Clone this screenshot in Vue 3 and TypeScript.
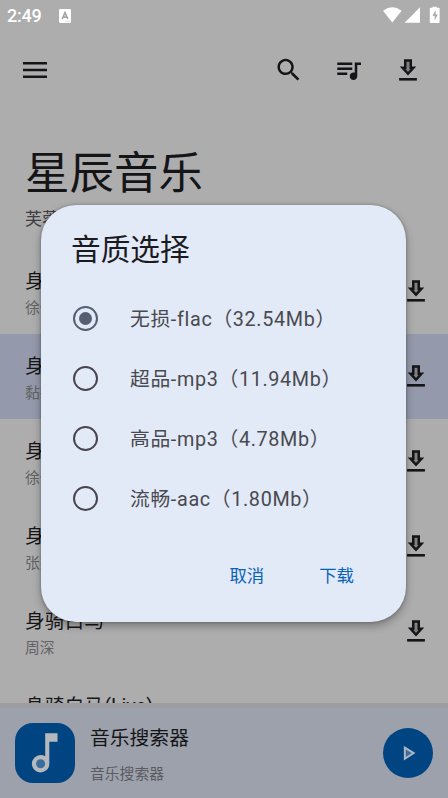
<script setup lang="ts">
import { ref } from 'vue'

interface Song {
  title: string
  artist: string
}

const songs: Song[] = [
  { title: '身骑白马', artist: '徐佳莹' },
  { title: '身骑白马', artist: '黏黏' },
  { title: '身骑白马', artist: '徐佳莹' },
  { title: '身骑白马', artist: '张杰' },
  { title: '身骑白马', artist: '周深' },
  { title: '身骑白马(Live)', artist: '徐佳莹' },
]
const activeSong = ref(1)

const qualities: string[] = [
  '无损-flac（32.54Mb）',
  '超品-mp3（11.94Mb）',
  '高品-mp3（4.78Mb）',
  '流畅-aac（1.80Mb）',
]
const selected = ref(0)
</script>

<template>
  <div class="screen">
    <div class="status">
      <span class="time">2:49</span>
      <svg class="badge" viewBox="0 0 12 14">
        <rect width="12" height="14" rx="1.2" fill="#fff" />
        <path d="M3.2 10 6 3.6 8.8 10M4.2 8.1h3.6" fill="none" stroke="#a5a5a6" stroke-width="1.6" />
        <path d="M6.5 12.3h4" stroke="#b5b5b6" stroke-width="0.8" stroke-dasharray="1 .6" />
      </svg>
      <svg class="signals" viewBox="0 0 58 18">
        <path d="M0 4.3Q9.3-2.6 18.6 4.3L9.3 16Z" fill="#fff" />
        <path d="M21.6 16.2 37 .8V16.2Z" fill="#fff" />
        <path d="M47.6 1.3h2V0h4.2v1.3h2q.8 0 .8.8v13.6q0 .8-.8.8h-8.2q-.8 0-.8-.8V2.1q0-.8.8-.8Z" fill="#fff" />
        <path d="M52.6 3.7 49.5 9.3h2.2v4.4l3-5.8h-2.1Z" fill="#a5a5a6" />
      </svg>
    </div>

    <header class="toolbar">
      <svg class="menu" viewBox="0 0 24 18"><path d="M0 2.2h24M0 9h24M0 15.7h24" stroke="#151518" stroke-width="2.5" /></svg>
      <div class="tools">
        <svg viewBox="-.6 0 24 24"><path d="M15.5 14h-.79l-.28-.27C15.41 12.59 16 11.11 16 9.5 16 5.91 13.09 3 9.5 3S3 5.91 3 9.5 5.91 16 9.5 16c1.61 0 3.09-.59 4.23-1.57l.27.28v.79l5 4.99L20.49 19l-4.99-5zm-6 0C7.01 14 5 11.99 5 9.5S7.01 5 9.5 5 14 7.01 14 9.5 11.99 14 9.5 14z" /></svg>
        <svg viewBox="-.4 0 24 24"><path d="M15 6H3v2h12V6zm0 4H3v2h12v-2zM3 16h8v-2H3v2zM17 6v8.18c-.31-.11-.65-.18-1-.18-1.66 0-3 1.34-3 3s1.34 3 3 3 3-1.34 3-3V8h3V6h-5z" /></svg>
        <svg viewBox="-6 -4 30 30">
          <path d="M5 .3h8v7.3h4.3L9 16.5.7 7.6H5Z" />
          <path d="M7.5 2.8h3v7.3h1.1L9 12.9 6.4 10.1h1.1Z" fill="#808083" />
          <path d="M.1 19h17.8v2.6H.1z" />
        </svg>
      </div>
    </header>

    <h1>星辰音乐</h1>
    <p class="subtitle">芙蓉</p>

    <ul class="songs">
      <li v-for="(song, i) in songs" :key="i" :class="{ active: i === activeSong }">
        <div class="song-text">
          <span class="song-title">{{ song.title }}</span>
          <span class="artist">{{ song.artist }}</span>
        </div>
        <svg class="download" viewBox="0 0 18 22">
          <path d="M5 .3h8v7.3h4.3L9 16.5.7 7.6H5Z" />
          <path d="M7.5 2.8h3v7.3h1.1L9 12.9 6.4 10.1h1.1Z" fill="#808083" />
          <path d="M.1 19h17.8v2.6H.1z" />
        </svg>
      </li>
    </ul>

    <footer class="player">
      <svg class="cover" viewBox="0 0 60 60">
        <rect width="60" height="60" rx="18" fill="#004482" />
        <path d="M30.2 10.3h12.3v8.5h-8.2v21.8a8.7 8.7 0 1 1-4.1-7.3Z" fill="#b5b9bd" />
        <circle cx="25.6" cy="40.8" r="4.5" fill="#396d9e" />
      </svg>
      <div class="track">
        <span class="track-title">音乐搜索器</span>
        <span class="track-artist">音乐搜索器</span>
      </div>
      <button class="play" aria-label="播放">
        <svg viewBox="0 0 50 50"><path d="m21.8 19.6 8.9 5.5-8.9 5.6Z" fill="#3d6c9d" stroke="#adb6c2" stroke-width="1.9" /></svg>
      </button>
    </footer>

    <section class="dialog" role="dialog">
      <h2>音质选择</h2>
      <div class="options">
        <label v-for="(quality, i) in qualities" :key="quality" :class="{ checked: i === selected }" @click="selected = i">
          <span class="radio"></span>
          <span class="option-text">{{ quality }}</span>
        </label>
      </div>
      <div class="actions">
        <button>取消</button>
        <button>下载</button>
      </div>
    </section>
  </div>
</template>

<style>
body {
  margin: 0;
}
</style>

<style scoped>
.screen {
  position: relative;
  display: flex;
  flex-direction: column;
  width: 448px;
  height: 798px;
  overflow: hidden;
  background: #adadae;
  color: #151518;
  font-family: Roboto, 'Noto Sans CJK SC', sans-serif;
}
svg {
  display: block;
  fill: #151518;
  flex-shrink: 0;
}
h1,
h2,
p,
ul {
  margin: 0;
  padding: 0;
  font-weight: 400;
}
button {
  border: 0;
  padding: 0;
  background: none;
  font: inherit;
}
.status {
  display: flex;
  align-items: center;
  height: 31px;
  flex-shrink: 0;
  padding: 0 7px;
  box-sizing: border-box;
  color: #fff;
}
.time {
  width: 52px;
  font-size: 18px;
  font-weight: 500;
  letter-spacing: -0.2px;
  line-height: 31px;
}
.badge {
  width: 12px;
  height: 14px;
}
.signals {
  width: 58px;
  height: 18px;
  margin-left: auto;
  transform: translateY(-0.5px);
}
.toolbar {
  display: flex;
  align-items: center;
  justify-content: space-between;
  height: 77px;
  flex-shrink: 0;
  padding: 0 25px 0 23px;
}
.menu {
  width: 24px;
  height: 18px;
}
.tools {
  display: flex;
  gap: 30px;
}
.tools svg {
  width: 30px;
  height: 30px;
}
h1 {
  height: 100px;
  flex-shrink: 0;
  padding: 31px 0 0 25px;
  font-size: 44.5px;
  line-height: 70px;
  box-sizing: border-box;
}
.subtitle {
  padding-left: 25px;
  height: 41px;
  flex-shrink: 0;
  font-size: 17px;
  line-height: 22px;
  color: #3d3d42;
}
.songs {
  list-style: none;
  height: 454px;
  flex-shrink: 0;
  overflow: hidden;
}
.songs li {
  display: flex;
  align-items: flex-start;
  justify-content: space-between;
  height: 85px;
  box-sizing: border-box;
  padding: 16px 23px 0 25px;
}
.songs li.active {
  background: #949aab;
}
.song-text {
  display: flex;
  flex-direction: column;
  padding-top: 1px;
}
.song-title {
  font-size: 19.8px;
  line-height: 32px;
}
.artist {
  font-size: 14.8px;
  line-height: 20px;
  color: #626265;
}
.download {
  width: 18px;
  height: 22px;
  margin-top: 15px;
}
.player {
  display: flex;
  align-items: center;
  height: 95px;
  flex-shrink: 0;
  box-sizing: border-box;
  border-top: 5px solid #9c9ca1;
  padding: 0 15px;
  background: #9ca1ac;
}
.cover {
  width: 60px;
  height: 60px;
}
.track {
  display: flex;
  flex-direction: column;
  margin-left: 15px;
  padding-top: 3px;
}
.track-title {
  font-size: 19.8px;
  line-height: 38px;
}
.track-artist {
  font-size: 14.8px;
  line-height: 32px;
  color: #5a5c61;
}
.play {
  width: 50px;
  height: 50px;
  margin-left: auto;
  border-radius: 50%;
  background: #004482;
}
.dialog {
  position: absolute;
  left: 41px;
  top: 205px;
  width: 365px;
  height: 417px;
  box-sizing: border-box;
  padding: 21px 30px 0;
  border-radius: 35px;
  background: #e2e9f7;
  box-shadow: 0 4px 9px rgba(0, 0, 0, 0.3), 0 0 3px rgba(0, 0, 0, 0.28);
}
h2 {
  font-size: 29.7px;
  line-height: 48px;
  color: #1b1b1f;
}
.options {
  padding-top: 14.5px;
}
.options label {
  display: flex;
  align-items: center;
  height: 59.9px;
  padding-left: 2px;
}
.radio {
  width: 25px;
  height: 25px;
  box-sizing: border-box;
  border: 2.5px solid #49454f;
  border-radius: 50%;
  display: grid;
  place-items: center;
}
.checked .radio {
  border-color: #565e71;
}
.checked .radio::after {
  content: '';
  width: 13px;
  height: 13px;
  border-radius: 50%;
  background: #565e71;
}
.option-text {
  margin-left: 32px;
  padding-bottom: 2px;
  font-size: 19.8px;
  letter-spacing: 0.65px;
  color: #49494f;
  white-space: nowrap;
}
.actions {
  display: flex;
  justify-content: flex-end;
  gap: 55px;
  padding: 27.5px 22px 0 0;
}
.actions button {
  font-size: 17.4px;
  line-height: 40px;
  color: #0863b8;
}
</style>
